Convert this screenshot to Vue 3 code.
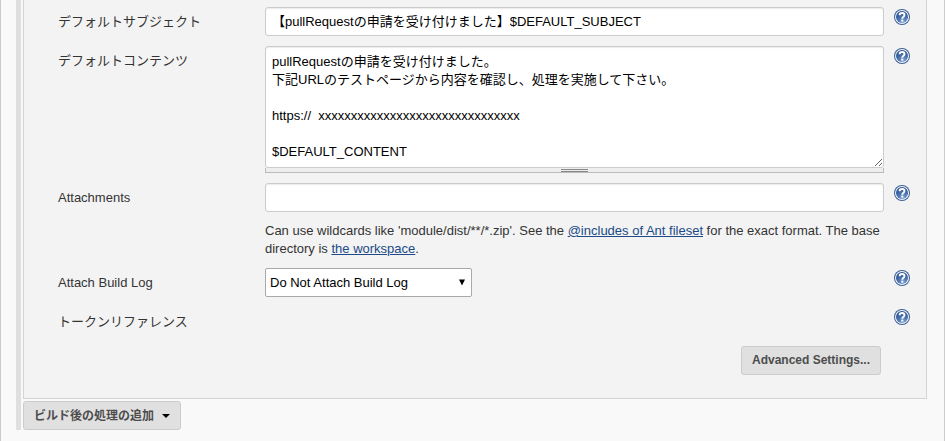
<script setup>
import { ref } from 'vue'

const subject = ref('【pullRequestの申請を受け付けました】$DEFAULT_SUBJECT')
const content = ref(
  'pullRequestの申請を受け付けました。\n' +
    '下記URLのテストページから内容を確認し、処理を実施して下さい。\n\n' +
    'https://  xxxxxxxxxxxxxxxxxxxxxxxxxxxxxxx\n\n' +
    '$DEFAULT_CONTENT'
)
const attachments = ref('')
const buildLog = ref('none')

const rows = [
  { id: 'subject', label: 'デフォルトサブジェクト' },
  { id: 'content', label: 'デフォルトコンテンツ' },
  { id: 'attachments', label: 'Attachments' },
  { id: 'build-log', label: 'Attach Build Log' },
  { id: 'token', label: 'トークンリファレンス' }
]
</script>

<template>
  <main class="page">
    <div class="section">
      <div class="panel">
        <div v-for="row in rows" :key="row.id" class="row">
          <label v-if="row.id !== 'token'" class="label" :for="row.id">{{ row.label }}</label>
          <span v-else class="label">{{ row.label }}</span>
          <div class="control">
            <input v-if="row.id === 'subject'" id="subject" v-model="subject" class="field" type="text">
            <template v-else-if="row.id === 'content'">
              <textarea id="content" v-model="content" class="field area" spellcheck="false"></textarea>
              <div class="handle"><span class="grip"></span></div>
            </template>
            <template v-else-if="row.id === 'attachments'">
              <input id="attachments" v-model="attachments" class="field" type="text">
              <p class="hint">
                Can use wildcards like 'module/dist/**/*.zip'. See the
                <a href="#fileset">@includes of Ant fileset</a> for the exact format. The base directory is
                <a href="#workspace">the workspace</a>.
              </p>
            </template>
            <div v-else-if="row.id === 'build-log'" class="picker">
              <select id="build-log" v-model="buildLog" class="select">
                <option value="none">Do Not Attach Build Log</option>
                <option value="attach">Attach Build Log</option>
                <option value="zip">Compress and Attach Build Log</option>
              </select>
              <svg class="arrow" width="8" height="7" viewBox="0 0 8 7"><path d="M1 0.5h6L4 6.5z" /></svg>
            </div>
          </div>
          <a class="help" href="#help" aria-label="Help">
            <svg width="16" height="16" viewBox="0 0 16 16">
              <defs>
                <radialGradient :id="`glow-${row.id}`" cx="0.6" cy="0.9" r="0.9">
                  <stop offset="0" stop-color="#7fa3d2" />
                  <stop offset="0.6" stop-color="#3f69a6" />
                  <stop offset="1" stop-color="#2b5089" />
                </radialGradient>
              </defs>
              <circle cx="8" cy="8" r="8" fill="#3c5f95" />
              <circle cx="8" cy="8" r="7" fill="#f4f8fd" />
              <circle cx="8" cy="8" r="6" :fill="`url(#glow-${row.id})`" />
              <path d="M5.6 6.2C5.6 4.7 6.6 4 8.1 4s2.4.8 2.4 2.1c0 1.7-2.2 1.7-2.2 3.6" fill="none" stroke="#fff" stroke-width="1.9" />
              <rect x="7.2" y="10.6" width="2.1" height="2" fill="#fff" />
            </svg>
          </a>
        </div>
        <div class="actions">
          <button class="button" type="button">Advanced Settings...</button>
        </div>
      </div>
      <button class="button add" type="button">
        ビルド後の処理の追加
        <svg width="8" height="4" viewBox="0 0 8 4"><path d="M0 0h8L4 4z" /></svg>
      </button>
    </div>
  </main>
</template>

<style>
body {
  background: #f9f9f9;
}
</style>

<style scoped>
.page {
  box-sizing: border-box;
  min-height: 100vh;
  padding: 0 17px 10px 15px;
  border: solid #ccc;
  border-width: 0 1px;
  color: #333;
  font: 13px/18px "Liberation Sans", "Noto Sans CJK JP", sans-serif;
}

.section {
  padding-left: 2px;
  border-left: 5px solid #dfdfdf;
}

.panel {
  display: flex;
  flex-direction: column;
  gap: 10px;
  padding: 7px 16px 23px 34px;
  border: solid #d4d4d4;
  border-width: 0 1px 1px;
  background: #f3f3f3;
}

.row {
  display: grid;
  grid-template-columns: 197px minmax(0, 1fr) 16px;
  column-gap: 10px;
  align-items: start;
  height: auto;
}

.label {
  height: 29px;
  line-height: 30px;
}

.control {
  margin-left: 0;
}

.field {
  display: block;
  box-sizing: border-box;
  width: 100%;
  height: 29px;
  margin: 0;
  padding: 0 6px 2px;
  border: 1px solid #ccc;
  border-radius: 3px;
  outline: none;
  background: #fff;
  box-shadow: inset 0 1px 1px rgb(0 0 0 / 8%);
  color: #000;
  font: inherit;
}

.area {
  height: 122px;
  padding: 6px;
  overflow: hidden;
  resize: vertical;
}

.handle {
  display: flex;
  justify-content: center;
  box-sizing: border-box;
  height: 5px;
  border: solid #bbb;
  border-width: 0 1px 1px;
  background: #eee;
}

.grip {
  box-sizing: border-box;
  width: 27px;
  height: 3px;
  margin-top: 1px;
  border: solid #888;
  border-width: 1px 0;
}

.hint {
  margin: 10px 0 0;
}

.hint a {
  color: #204a87;
}

.picker {
  position: relative;
  width: 207px;
}

.select {
  display: block;
  width: 100%;
  height: 29px;
  margin: 0;
  padding: 0 20px 0 4px;
  border: 1px solid #a9a9a9;
  border-radius: 2px;
  appearance: none;
  background: #fff;
  color: #000;
  font: inherit;
}

.arrow {
  position: absolute;
  top: 11px;
  right: 6px;
  pointer-events: none;
}

.help {
  display: block;
  height: 16px;
  margin-top: 2px;
}

.help svg {
  display: block;
}

.actions {
  display: flex;
  justify-content: flex-end;
  padding-right: 29px;
}

.button {
  height: 29px;
  padding: 0 10px 2px;
  border: 1px solid #ccc;
  border-radius: 3px;
  background: #e0e0e0;
  color: #4d4d4d;
  font: bold 12px/18px "Liberation Sans", "Noto Sans CJK JP", sans-serif;
}

.add {
  display: flex;
  align-items: center;
  gap: 8px;
  margin-top: 2px;
  padding-bottom: 0;
}
</style>
